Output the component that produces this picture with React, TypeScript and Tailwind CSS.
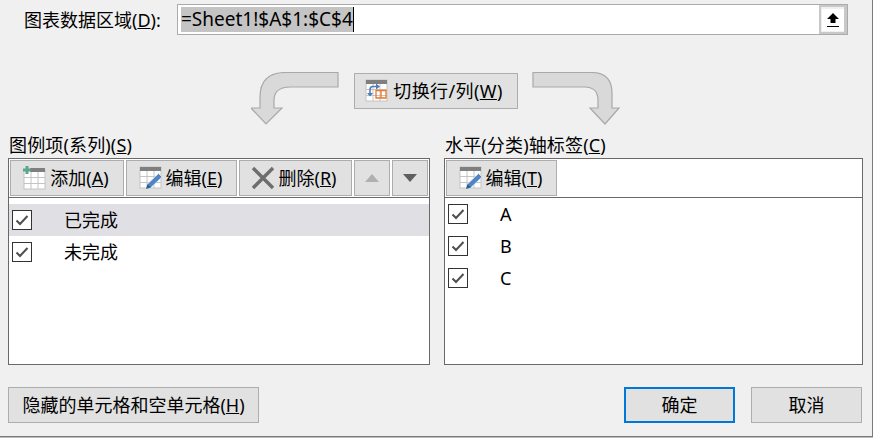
const font = "font-['Noto_Sans','Noto_Sans_CJK_SC',sans-serif]";

function Btn({ className = "", focused, children }: { className?: string; focused?: boolean; children: React.ReactNode }) {
  return (
    <button
      className={`flex h-[36px] items-center justify-center bg-[#e1e1e1] text-[18px] leading-none text-black ${
        focused ? "border-[2px] border-[#0078d7]" : "border border-[#adadad]"
      } ${className}`}
    >
      {children}
    </button>
  );
}

function Check() {
  return (
    <span className="flex h-[20px] w-[20px] shrink-0 items-center justify-center border border-[#333] bg-white">
      <svg width="14" height="12" viewBox="0 0 14 12" fill="none">
        <path d="M1.5 6.5 L5 10 L12.5 2" stroke="#4f4f4f" strokeWidth="2" />
      </svg>
    </span>
  );
}

function Grid() {
  return (
    <>
      <rect x="1" y="1" width="21" height="21" fill="#fff" stroke="#c4c4c4" />
      <rect x="1" y="1" width="21" height="4" fill="#7f7f7f" />
      <path d="M1 10.5H22M1 16.5H22M8 5V22M15 5V22" stroke="#c4c4c4" />
    </>
  );
}

function AddIcon() {
  return (
    <svg width="24" height="24" viewBox="0 0 24 24" className="shrink-0">
      <rect x="2" y="4" width="21" height="19" fill="#fff" stroke="#c4c4c4" />
      <rect x="8" y="2" width="15" height="4" fill="#7f7f7f" />
      <path d="M2 11.5H23M2 17.5H23M9 6V23M16 6V23" stroke="#c4c4c4" />
      <path d="M5 0V8M1 4H9" stroke="#5fa58c" strokeWidth="3" />
    </svg>
  );
}

function EditIcon() {
  return (
    <svg width="24" height="24" viewBox="0 0 24 24" className="shrink-0">
      <Grid />
      <path d="M7 23 L8.5 18 L19.5 7.5 L23 11 L12 21.5 Z" fill="#4f86c6" stroke="#fff" strokeWidth="0.6" />
      <path d="M7 23 L8.5 18 L12 21.5 Z" fill="#2f5f96" />
    </svg>
  );
}

function SwitchIcon() {
  return (
    <svg width="24" height="24" viewBox="0 0 24 24" className="shrink-0">
      <Grid />
      <path d="M11 11.5H21V19H11Z M16 11.5V19" fill="none" stroke="#e8782a" strokeWidth="1.3" />
      <path d="M5 14V10.5Q5 7.5 8 7.5H12" fill="none" stroke="#4f7fb5" strokeWidth="1.6" />
      <path d="M11 4.5L15 7.5L11 10.5Z M2 14H8L5 17.5Z" fill="#4f7fb5" />
    </svg>
  );
}

function Row({ label, active }: { label: string; active?: boolean }) {
  return (
    <div className={`flex h-[32px] items-center pl-[3px] text-[18px] ${active ? "bg-[#e0dfe4]" : ""}`}>
      <Check />
      <span className="ml-[32px] leading-none">{label}</span>
    </div>
  );
}

export default function App() {
  return (
    <div className="h-[438px] w-[873px] overflow-hidden bg-[#b9bec4]">
      <div className={`flex h-[437px] w-[873px] flex-col border-r border-b border-[#7a7a7a] bg-[#f0f0f0] text-black ${font}`}>
        {/* data range */}
        <div className="mt-[4px] flex h-[31px] items-center pl-[24px] pr-[24px]">
          <span className="w-[153px] text-[18px] leading-none">图表数据区域(<u>D</u>):</span>
          <div className="flex h-full flex-1 items-stretch border border-[#ababab] bg-white">
            <div className="flex flex-1 items-center pl-[3px]">
              <span className="border-r border-black bg-[#c4c4c4] text-[19px] leading-[25px]">=Sheet1!$A$1:$C$4</span>
            </div>
            <div className="flex w-[28px] items-center justify-center border-[2px] border-r-[3px] border-[#c8c8c8] bg-[#f0f0f0]">
              <div className="flex h-[22px] w-[22px] items-center justify-center bg-white">
                <svg width="14" height="16" viewBox="0 0 14 16">
                  <path d="M7 1L13 7H9.5V11H4.5V7H1Z" fill="#000" />
                  <rect x="1" y="14" width="12" height="1" fill="#000" />
                </svg>
              </div>
            </div>
          </div>
        </div>

        {/* switch row */}
        <div className="mt-[37px] flex h-[53px] items-start justify-center pr-[1px]">
          <svg width="89" height="54" viewBox="252 72 89 54" className="shrink-0">
            <path d="M339 72.5V87H292Q275 87 275 100V108H283L267 124L252 108H261V97Q261 72.5 287 72.5Z" fill="#d9d9d9" stroke="#a9a9a9" strokeWidth="1.2" />
          </svg>
          <Btn className="mx-[14px] mt-[1px] w-[164px] gap-[4px] pb-[1px] pr-[3px]">
            <SwitchIcon />
            <span className="tracking-[0.4px]">切换行/列(<u>W</u>)</span>
          </Btn>
          <svg width="89" height="54" viewBox="531 72 89 54" className="shrink-0">
            <path d="M532 72.5V87H583Q597 87 597 100V108H589L604 124L618 108H611V93Q611 72.5 590 72.5Z" fill="#d9d9d9" stroke="#a9a9a9" strokeWidth="1.2" />
          </svg>
        </div>

        {/* lists */}
        <div className="mt-[9px] flex gap-[14px] pl-[8px] pr-[9px]">
          <section className="w-[422px]">
            <h2 className="h-[24px] pl-[1px] text-[18px] font-normal leading-[22px] tracking-[0.15px]">图例项(系列)(<u>S</u>)</h2>
            <div className="flex h-[207px] flex-col border border-[#696969] bg-white">
              <div className="flex h-[39px] shrink-0 gap-[2px] border-b border-[#696969] pl-[1px] pt-[1px]">
                <Btn className="w-[114px] gap-[4px] pr-[3px]"><AddIcon /><span>添加(<u>A</u>)</span></Btn>
                <Btn className="w-[111px] gap-[3px] pr-[2px]"><EditIcon /><span>编辑(<u>E</u>)</span></Btn>
                <Btn className="w-[113px] gap-[3px] pr-[3px]">
                  <svg width="24" height="24" viewBox="0 0 24 24" className="shrink-0">
                    <path d="M2 2L22 22M22 2L2 22" stroke="#6e6e6e" strokeWidth="3.4" />
                  </svg>
                  <span>删除(<u>R</u>)</span>
                </Btn>
                <Btn className="w-[36px]">
                  <svg width="14" height="8" viewBox="0 0 14 8"><path d="M7 0L14 8H0Z" fill="#b0b0b0" /></svg>
                </Btn>
                <Btn className="w-[36px]">
                  <svg width="14" height="8" viewBox="0 0 14 8"><path d="M0 0H14L7 8Z" fill="#5f5f5f" /></svg>
                </Btn>
              </div>
              <div className="pt-[6px]">
                <Row label="已完成" active />
                <Row label="未完成" />
              </div>
            </div>
          </section>
          <section className="w-[419px]">
            <h2 className="h-[24px] pl-[1px] text-[18px] font-normal leading-[22px] tracking-[0.15px]">水平(分类)轴标签(<u>C</u>)</h2>
            <div className="flex h-[207px] flex-col border border-[#696969] bg-white">
              <div className="flex h-[39px] shrink-0 border-b border-[#696969] pl-[1px] pt-[1px]">
                <Btn className="w-[111px] gap-[3px] pr-[2px]"><EditIcon /><span>编辑(<u>T</u>)</span></Btn>
              </div>
              <div>
                <Row label="A" />
                <Row label="B" />
                <Row label="C" />
              </div>
            </div>
          </section>
        </div>

        {/* footer */}
        <div className="mt-[22px] flex pl-[8px] pr-[10px]">
          <Btn className="w-[251px]"><span>隐藏的单元格和空单元格(<u>H</u>)</span></Btn>
          <Btn focused className="ml-auto w-[111px]">确定</Btn>
          <Btn className="ml-[16px] w-[111px]">取消</Btn>
        </div>
      </div>
    </div>
  );
}
